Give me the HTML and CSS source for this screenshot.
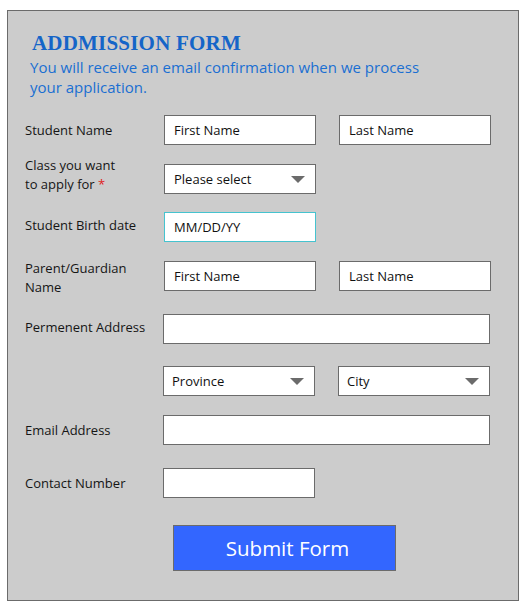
FILE: index.html
```html
<!DOCTYPE html>
<html lang="en">
<head>
<meta charset="utf-8">
<title>Addmission Form</title>
<link rel="stylesheet" href="styles.css">
</head>
<body>
<div class="edge-mark"><span></span><span></span></div>
<form class="panel">
  <h1 class="title">ADDMISSION FORM</h1>
  <p class="intro">You will receive an email confirmation when we process<br>your application.</p>

  <div class="row">
    <label class="label">Student Name</label>
    <div class="controls controls--inset">
      <input class="field" type="text" value="First Name">
      <input class="field" type="text" value="Last Name">
    </div>
  </div>

  <div class="row">
    <label class="label label--raised">Class you want<br>to apply for <span class="req">*</span></label>
    <div class="controls controls--inset">
      <div class="select"><span>Please select</span><svg class="caret" width="14" height="7" viewBox="0 0 14 7"><path d="M0 0H14L7 7Z"/></svg></div>
    </div>
  </div>

  <div class="row row--tight">
    <label class="label label--up">Student Birth date</label>
    <div class="controls controls--inset">
      <input class="field field--focus" type="text" value="MM/DD/YY">
    </div>
  </div>

  <div class="row">
    <label class="label label--down">Parent/Guardian<br>Name</label>
    <div class="controls controls--inset">
      <input class="field" type="text" value="First Name">
      <input class="field" type="text" value="Last Name">
    </div>
  </div>

  <div class="row row--loose">
    <label class="label label--up">Permenent Address</label>
    <div class="controls">
      <input class="field field--wide" type="text" value="">
    </div>
  </div>

  <div class="row row--mid">
    <span class="label"></span>
    <div class="controls">
      <div class="select select--flush"><span>Province</span><svg class="caret" width="14" height="7" viewBox="0 0 14 7"><path d="M0 0H14L7 7Z"/></svg></div>
      <div class="select select--flush"><span>City</span><svg class="caret" width="14" height="7" viewBox="0 0 14 7"><path d="M0 0H14L7 7Z"/></svg></div>
    </div>
  </div>

  <div class="row">
    <label class="label">Email Address</label>
    <div class="controls">
      <input class="field field--wide" type="text" value="">
    </div>
  </div>

  <div class="row row--loose">
    <label class="label">Contact Number</label>
    <div class="controls">
      <input class="field" type="text" value="">
    </div>
  </div>

  <div class="actions">
    <button class="submit" type="button">Submit Form</button>
  </div>
</form>
</body>
</html>
```
FILE: styles.css
```css
html, body {
  background: #ffffff;
}
body {
  margin: 10px 0 0 7px;
  position: relative;
  font-family: "Open Sans", "Noto Sans", sans-serif;
}

.edge-mark {
  position: absolute;
  left: -7px;
  top: 292px;
  width: 1px;
  display: flex;
  flex-direction: column;
  gap: 4px;
}
.edge-mark span {
  display: block;
  width: 1px;
  height: 33px;
  background: #3ec6d6;
}

.panel {
  box-sizing: border-box;
  width: 512px;
  height: 591px;
  border: 1px solid #6b6b6b;
  background: #cccccc;
  padding: 20px 17px 0 17px;
  margin: 0;
}

.title {
  margin: 0 0 0 7px;
  font-family: "Liberation Serif", serif;
  font-weight: bold;
  font-size: 21px;
  line-height: 24px;
  color: #1565c8;
  letter-spacing: 0.2px;
}

.intro {
  margin: 2px 0 0 5px;
  font-size: 15px;
  line-height: 20px;
  color: #1a6fd2;
}

.row {
  display: flex;
  align-items: center;
  height: 30px;
  margin-top: 19px;
}
.intro + .row {
  margin-top: 18px;
}
.row--tight {
  margin-top: 18px;
}
.row--mid {
  margin-top: 22px;
}
.row--loose {
  margin-top: 23px;
}

.label {
  flex: 0 0 138px;
  font-size: 13px;
  line-height: 19px;
  color: #151515;
}
.label--raised {
  position: relative;
  top: -4px;
}
.label--up {
  position: relative;
  top: -2px;
}
.label--down {
  position: relative;
  top: 2px;
}
.req {
  color: #e02020;
}

.controls {
  display: flex;
  gap: 23px;
  height: 30px;
}
.controls--inset {
  padding-left: 1px;
}

.field,
.select {
  box-sizing: border-box;
  width: 152px;
  height: 30px;
  margin: 0;
  border: 1px solid #6b6b6b;
  background: #ffffff;
  font-family: "Open Sans", "Noto Sans", sans-serif;
  font-size: 13px;
  color: #111111;
  padding: 0 0 0 9px;
  outline: none;
}
.field--wide {
  width: 327px;
}
.field--focus {
  border-color: #45c3cf;
}

.select {
  display: flex;
  align-items: center;
  justify-content: space-between;
  padding-right: 10px;
  padding-left: 9px;
}
.select--flush {
  padding-left: 8px;
}
.caret {
  display: block;
  fill: #6b6b6b;
}

.actions {
  margin-top: 27px;
  padding-left: 148px;
}
.submit {
  box-sizing: border-box;
  width: 223px;
  height: 46px;
  margin: 0;
  border: 1px solid #6b6b6b;
  background: #3366ff;
  color: #ffffff;
  font-family: "Open Sans", "Noto Sans", sans-serif;
  font-size: 20.5px;
  padding: 0 0 0 6px;
}
```
